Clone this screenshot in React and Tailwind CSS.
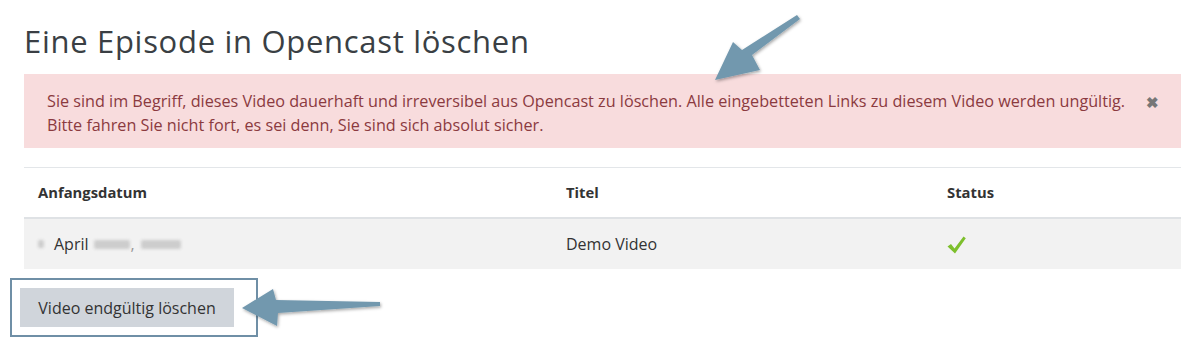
import React from 'react'

const font = { fontFamily: '"Open Sans", "Noto Sans", sans-serif' }

function Arrow({ points, className }) {
  return (
    <svg className={className} width="1200" height="350" viewBox="0 0 1200 350">
      <defs>
        <filter id="sh" x="-20%" y="-20%" width="140%" height="140%">
          <feDropShadow dx="1" dy="1.5" stdDeviation="1.5" floodColor="#000" floodOpacity="0.35" />
        </filter>
      </defs>
      <polygon points={points} fill="#7298ae" filter="url(#sh)" />
    </svg>
  )
}

function Blur({ w, h = 9, className = '' }) {
  return <span className={`inline-block rounded-[2px] bg-[#cdcdcd] blur-[1.5px] ${className}`} style={{ width: w, height: h }} />
}

export default function App() {
  return (
    <div className="relative h-[350px] w-[1200px] overflow-hidden bg-white text-[#333]" style={font}>
      <div className="ml-[24px] w-[1157px] pt-[23px]">
        <h2 className="text-[31px] leading-[36px] tracking-[0.7px] text-[#3a3f44]">Eine Episode in Opencast löschen</h2>

        <div className="mt-[15px] flex items-start justify-between bg-[#f8dcdd] pl-[23px] pr-[22px] pt-[15px] pb-[11px] text-[16.2px] leading-[24px] text-[#8b3a3f]">
          <p>
            Sie sind im Begriff, dieses Video dauerhaft und irreversibel aus Opencast zu löschen. Alle eingebetteten Links zu diesem Video werden ungültig.
            <br />
            Bitte fahren Sie nicht fort, es sei denn, Sie sind sich absolut sicher.
          </p>
          <span className="mt-[1px] text-[15px] font-bold leading-[24px] text-[#777]">✖</span>
        </div>

        <div className="mt-[19px] border-t border-[#e3e6e9]">
          <div className="grid h-[51px] grid-cols-[528px_382px_1fr] items-center border-b-2 border-[#dfe2e5] text-[14.8px] font-bold text-[#333]">
            <div className="pl-[14px]">Anfangsdatum</div>
            <div className="pl-[14px]">Titel</div>
            <div className="pl-[13px]">Status</div>
          </div>
          <div className="grid h-[50px] grid-cols-[528px_382px_1fr] items-center bg-[#f2f2f2] text-[16px] text-[#333]">
            <div className="flex items-center pl-[14px]">
              <Blur w={6} h={8} className="mr-[10px]" />
              <span>April</span>
              <Blur w={36} className="ml-[5px]" />
              <span className="ml-[1px] text-[#999]">,</span>
              <Blur w={40} className="ml-[6px]" />
            </div>
            <div className="pl-[14px]">Demo Video</div>
            <div className="pl-[13px]">
              <svg width="20" height="20" viewBox="0 0 20 20" className="mt-[2px]">
                <path d="M0.5 11.5 L4 9 L7.5 13.5 L16.5 1.5 L18.8 3.3 L8 18.5 Z" fill="#7dbf2c" />
              </svg>
            </div>
          </div>
        </div>
      </div>

      <div className="ml-[10px] mt-[9px] w-[248px] border-2 border-[#6f8fa6] p-[8px]">
        <button className="h-[39px] w-[214px] bg-[#d0d5db] text-[16px] text-[#333]">Video endgültig löschen</button>
      </div>

      <Arrow className="pointer-events-none absolute left-0 top-0" points="797,15 800,19 752,55 760,70 715,80 733,42 742,50" />
      <Arrow className="pointer-events-none absolute left-0 top-0" points="380,302 380,306 278,313 277,326 242,308 273,289 276,300" />
    </div>
  )
}
